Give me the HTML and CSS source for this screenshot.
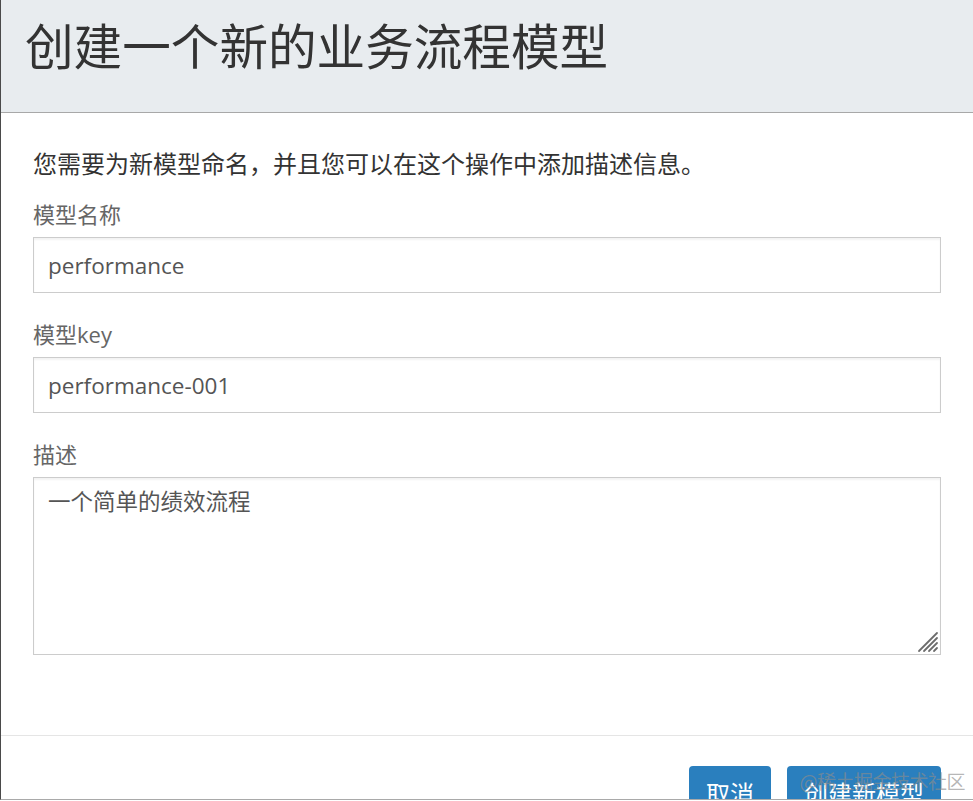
FILE: index.html
```html
<!DOCTYPE html>
<html lang="zh-CN">
<head>
<meta charset="utf-8">
<title>创建一个新的业务流程模型</title>
<link rel="stylesheet" href="styles.css">
</head>
<body>
<div class="modal">
  <div class="modal-header">
    <h1 class="modal-title">创建一个新的业务流程模型</h1>
  </div>
  <div class="modal-body">
    <p class="intro">您需要为新模型命名，并且您可以在这个操作中添加描述信息。</p>
    <div class="form-group">
      <label class="form-label">模型名称</label>
      <input class="form-control" type="text" value="performance">
    </div>
    <div class="form-group">
      <label class="form-label">模型key</label>
      <input class="form-control" type="text" value="performance-001">
    </div>
    <div class="form-group">
      <label class="form-label">描述</label>
      <div class="textarea-wrap">
        <textarea class="form-control textarea">一个简单的绩效流程</textarea>
        <svg class="grip" width="22" height="22" viewBox="0 0 22 22" aria-hidden="true">
          <g stroke="#6b6b6b" stroke-width="1.8" stroke-linecap="round">
            <line x1="2" y1="20" x2="20" y2="2"/>
            <line x1="7" y1="20" x2="20" y2="7"/>
            <line x1="12" y1="20" x2="20" y2="12"/>
            <line x1="17" y1="20" x2="20" y2="17"/>
          </g>
        </svg>
      </div>
    </div>
  </div>
  <div class="modal-footer">
    <button class="btn">取消</button>
    <button class="btn">创建新模型</button>
  </div>
  <div class="watermark">@稀土掘金技术社区</div>
</div>
</body>
</html>
```
FILE: styles.css
```css
html, body {
  margin: 0;
  padding: 0;
  background: #ffffff;
  overflow: hidden;
}
body {
  font-family: "Open Sans", "Noto Sans CJK SC", sans-serif;
}
.modal {
  position: relative;
  width: 973px;
  height: 800px;
  box-sizing: border-box;
  border-left: 1px solid #4a4a4a;
  border-bottom: 1px solid #a9a9a9;
  overflow: hidden;
  display: flex;
  flex-direction: column;
}
.modal-header {
  height: 113px;
  box-sizing: border-box;
  background: #e8ecef;
  border-bottom: 1px solid #a8a8a8;
  padding: 13px 24px 0;
  flex-shrink: 0;
}
.modal-title {
  margin: 0;
  font-size: 48.6px;
  line-height: 67px;
  font-weight: 400;
  color: #333333;
}
.modal-body {
  padding: 34px 32px 0;
  height: 623px;
  box-sizing: border-box;
  border-bottom: 1px solid #e5e5e5;
  flex-shrink: 0;
}
.intro {
  margin: 0 0 17px;
  font-size: 24px;
  line-height: 34px;
  color: #333333;
}
.form-group {
  margin-bottom: 25px;
}
.form-label {
  display: block;
  font-size: 22px;
  line-height: 32px;
  color: #666666;
  margin-bottom: 7px;
}
.form-control {
  display: block;
  width: 100%;
  height: 56px;
  box-sizing: border-box;
  border: 1px solid #cccccc;
  border-radius: 0;
  padding: 0 14px;
  font-family: "Open Sans", "Noto Sans CJK SC", sans-serif;
  font-size: 22.5px;
  color: #555555;
  background: #ffffff;
  box-shadow: inset 0 2px 2px rgba(0, 0, 0, 0.05);
  outline: none;
}
.textarea-wrap {
  position: relative;
}
.textarea {
  height: 178px;
  padding: 8px 14px;
  line-height: 32px;
  resize: none;
}
.grip {
  position: absolute;
  right: 2px;
  bottom: 2px;
}
.modal-footer {
  display: flex;
  justify-content: flex-end;
  gap: 16px;
  padding: 30px 32px 0;
}
.btn {
  height: 54px;
  padding: 2px 17px 0;
  border: none;
  border-radius: 4px;
  background: #2a7fbe;
  color: #ffffff;
  font-family: "Open Sans", "Noto Sans CJK SC", sans-serif;
  font-size: 24px;
  line-height: 52px;
}
.watermark {
  position: absolute;
  right: 8px;
  bottom: 6px;
  font-family: "Noto Sans CJK SC", sans-serif;
  font-size: 19px;
  line-height: 24px;
  color: rgba(140, 140, 140, 0.65);
  letter-spacing: -0.5px;
}
```
